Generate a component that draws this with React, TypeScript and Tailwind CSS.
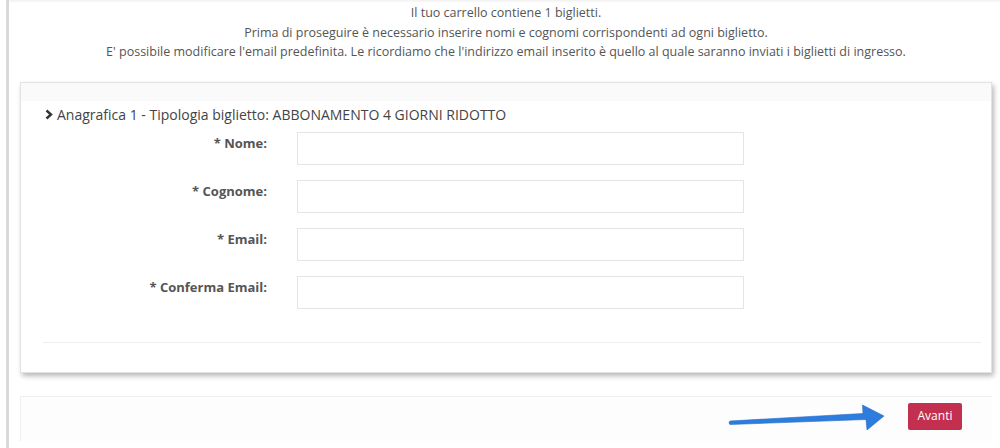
const fields = ['Nome', 'Cognome', 'Email', 'Conferma Email']

export default function App() {
    return (
        <div className="h-[448px] w-[1000px] overflow-hidden bg-white font-['Open_Sans',sans-serif] text-[#555]">
            <div className="ml-[6px] h-full border-l-[3px] border-[#d9d9d9] pl-[11px] pr-[8px] shadow-[inset_0_4px_3px_-3px_rgba(0,0,0,0.08)]">
                {/* Intro text */}
                <div className="pt-[3px] text-center text-[12.5px] leading-[19.5px] text-[#555]">
                    <p>Il tuo carrello contiene 1 biglietti.</p>
                    <p>Prima di proseguire è necessario inserire nomi e cognomi corrispondenti ad ogni biglietto.</p>
                    <p>E' possibile modificare l'email predefinita. Le ricordiamo che l'indirizzo email inserito è quello al quale saranno inviati i biglietti di ingresso.</p>
                </div>

                {/* Ticket card */}
                <div className="mt-[20px] border border-[#e2e2e2] bg-white shadow-[2px_3px_5px_rgba(0,0,0,0.28)]">
                    <div className="h-[18px] bg-[#fafafa]" />
                    <div className="pl-[24px] pt-[4px]">
                        <h3 className="flex h-[20px] items-center text-[14px] text-[#444]">
                            <svg width="8" height="11" viewBox="0 0 8 11" className="mr-[4px]">
                                <path d="M1.5 1.5 L6 5.5 L1.5 9.5" fill="none" stroke="#333" strokeWidth="2.4" />
                            </svg>
                            Anagrafica 1 - Tipologia biglietto: ABBONAMENTO 4 GIORNI RIDOTTO
                        </h3>

                        <div className="mt-[7px] flex flex-col gap-[15px]">
                            {fields.map((f) => (
                                <div key={f} className="flex items-start">
                                    <label className="w-[222px] pt-[1px] text-right text-[13px] font-bold leading-[20px] text-[#555]">
                                        * {f}:
                                    </label>
                                    <input
                                        type="text"
                                        className="ml-[30px] h-[33px] w-[447px] border border-[#e4e4e4] bg-white outline-none"
                                    />
                                </div>
                            ))}
                        </div>

                        <div className="mr-[10px] mt-[33px] -ml-[2px] border-t border-[#eeeeee]" />
                        <div className="h-[29px]" />
                    </div>
                </div>

                {/* Footer */}
                <div className="mt-[23px] flex h-[45px] items-start justify-end border-l border-t border-[#efefef] bg-[#fdfdfd] pr-[30px] pt-[6px]">
                    <svg width="160" height="28" viewBox="0 0 160 28" className="mr-[21px]">
                        <path
                            d="M3 18 L136 10.5 L135.5 2 L157 13 L140 27 L139 16.5 L3 21.5 Q1 19.75 3 18 Z"
                            fill="#2d7ddf"
                            stroke="#2569c2"
                            strokeWidth="0.6"
                        />
                    </svg>
                    <button className="h-[27px] w-[54px] rounded-[2px] bg-[#c3304f] text-[12px] text-white">
                        Avanti
                    </button>
                </div>
            </div>
        </div>
    )
}
